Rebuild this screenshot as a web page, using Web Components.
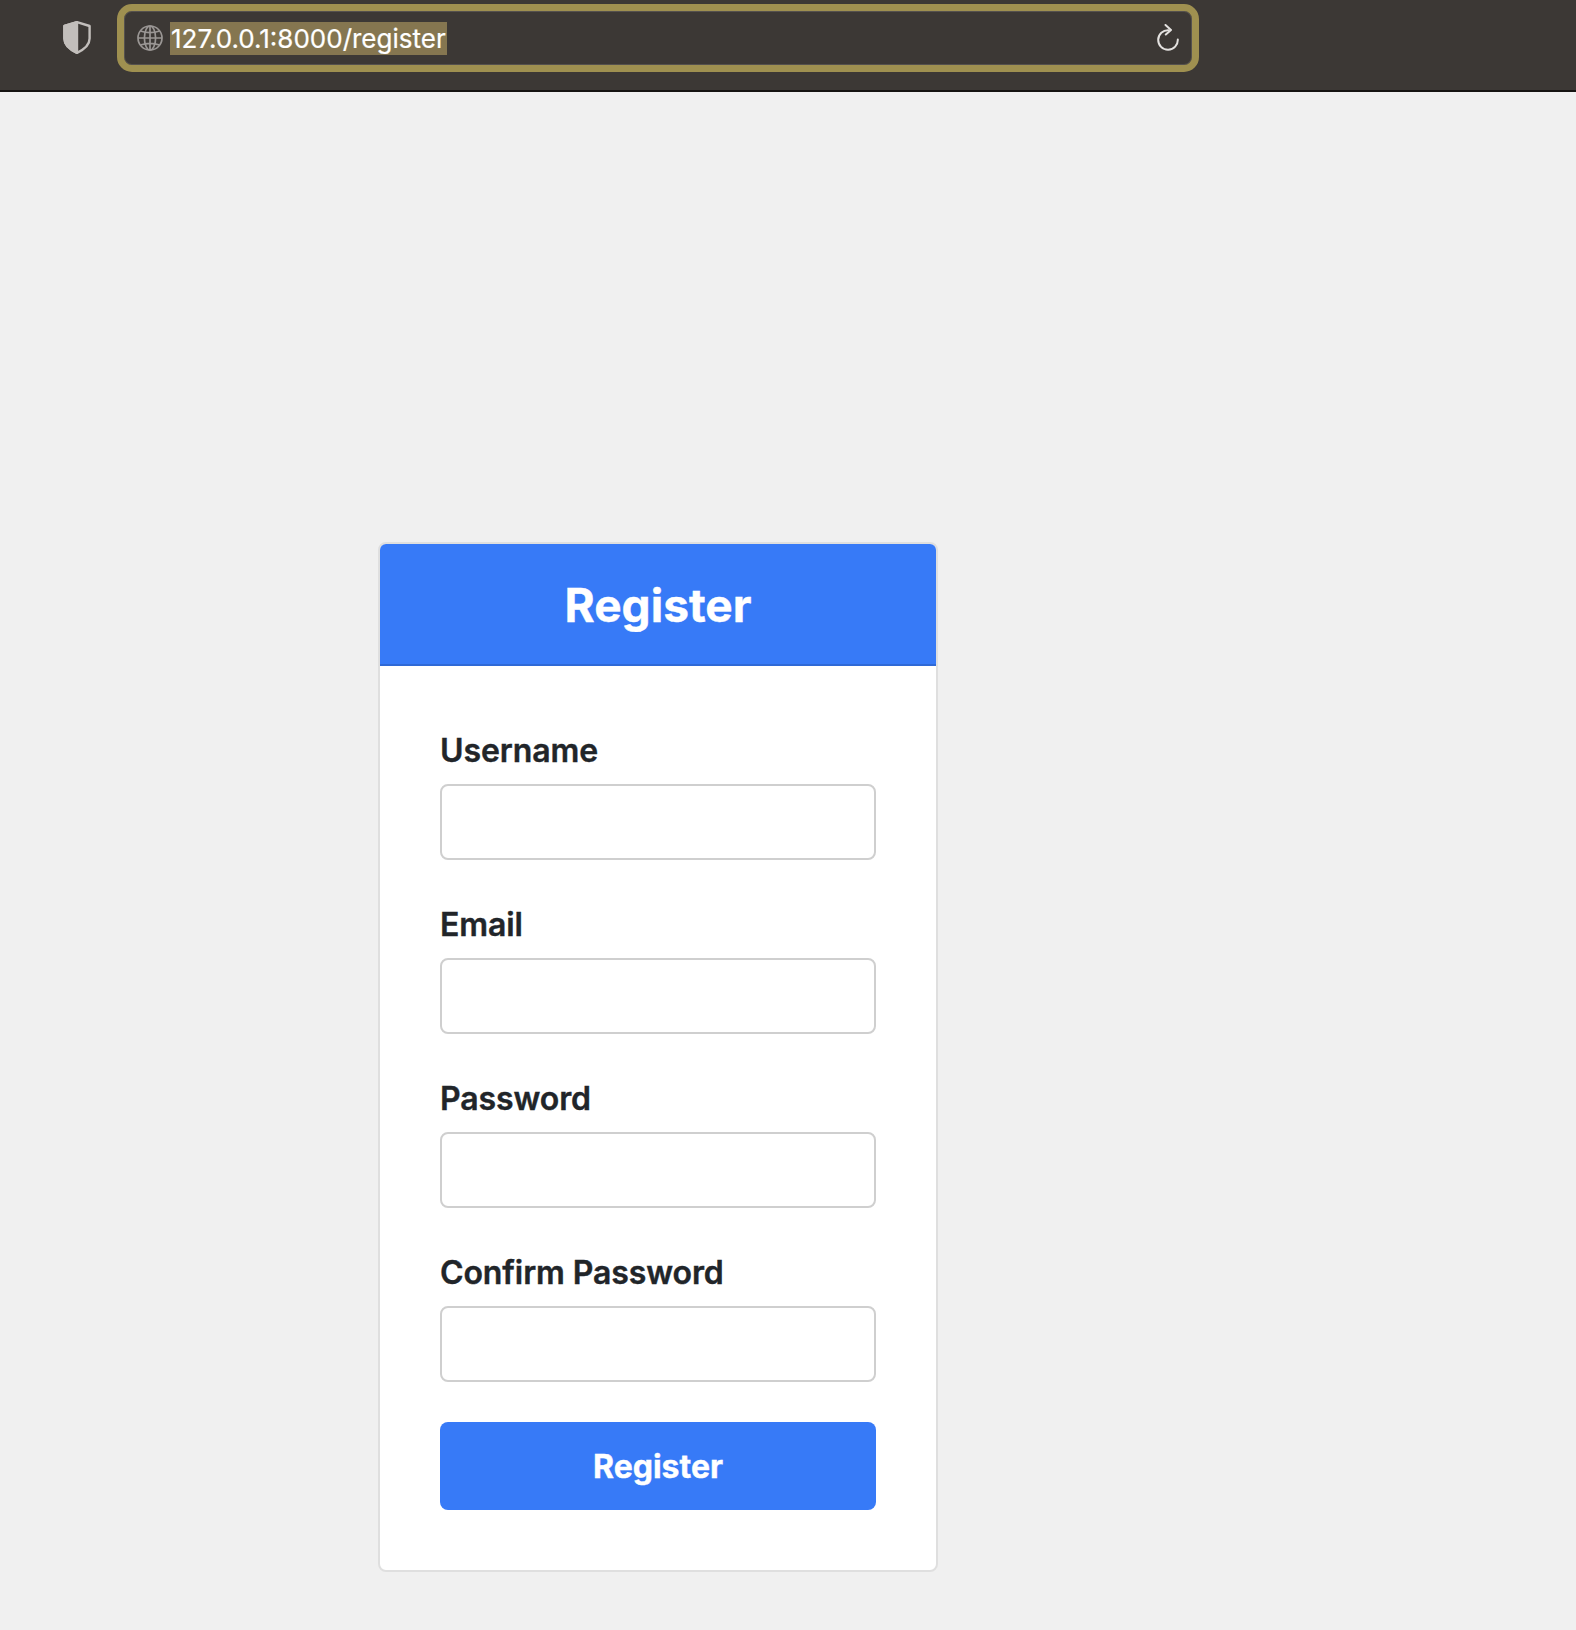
<!DOCTYPE html>
<html lang="en">
<head>
<meta charset="utf-8">
<title>Register</title>
<style>
  html, body { margin: 0; padding: 0; }
  body { background: #f0f0f0; font-family: Inter, "Liberation Sans", sans-serif; }
</style>
</head>
<body>
<browser-bar url="127.0.0.1:8000/register"></browser-bar>
<register-page>
  <register-card heading="Register">
    <form-field label="Username" type="text"></form-field>
    <form-field label="Email" type="email"></form-field>
    <form-field label="Password" type="password"></form-field>
    <form-field label="Confirm Password" type="password"></form-field>
    <submit-button>Register</submit-button>
  </register-card>
</register-page>

<script>
class BrowserBar extends HTMLElement {
    constructor() {
        super();
        this.attachShadow({ mode: 'open' });
        this.render();
    }

    render() {
        this.shadowRoot.innerHTML = `
        <style>
            :host {
                display: flex;
                align-items: flex-start;
                box-sizing: border-box;
                height: 92px;
                background: #3c3835;
                border-bottom: 2px solid #161412;
                padding: 4px 0 0 63px;
            }
            .shield {
                width: 28px;
                height: 33px;
                margin: 17px 26px 0 0;
                flex: none;
            }
            .ring {
                display: flex;
                align-items: center;
                box-sizing: border-box;
                width: 1082px;
                height: 68px;
                border: 7px solid #9f9050;
                border-radius: 15px;
                padding: 0 13px;
                box-shadow: inset 0 0 0 1px #55514e;
            }
            .globe { width: 26px; height: 26px; flex: none; margin-right: 7px; }
            .url {
                background: #857650;
                color: #fff;
                font-size: 26px;
                font-weight: 400;
                line-height: 31px;
                -webkit-text-stroke: 0.2px #fff;
                font-family: Inter, "Liberation Sans", sans-serif;
                padding: 1px 1px;
            }
            .reload { width: 22px; height: 27px; margin: 0 0 2px auto; flex: none; }
        </style>
        <svg class="shield" viewBox="0 0 28 33">
            <path d="M14 1.2 L26.6 5 V17.5 C26.6 24.5 20 29 14 31.8 C8 29 1.4 24.5 1.4 17.5 V5 Z" fill="none" stroke="#c2bebb" stroke-width="2.4" stroke-linejoin="round"/>
            <path d="M14 1.2 V31.8 C8 29 1.4 24.5 1.4 17.5 V5 Z" fill="#c2bebb" stroke="#c2bebb" stroke-width="2.4" stroke-linejoin="round"/>
        </svg>
        <div class="ring">
            <svg class="globe" viewBox="0 0 26 26" fill="none" stroke="#9a9694" stroke-width="1.7">
                <circle cx="13" cy="13" r="12"/>
                <ellipse cx="13" cy="13" rx="5.6" ry="12"/>
                <path d="M13 1 V25 M1 13 H25 M3.4 6 Q13 9.4 22.6 6 M3.4 20 Q13 16.6 22.6 20"/>
            </svg>
            <span class="url">${this.getAttribute('url')}</span>
            <svg class="reload" viewBox="0 0 22 27" fill="none" stroke="#e4e2e0" stroke-width="2" stroke-linecap="round" stroke-linejoin="round">
                <path d="M11.5 6.2 A9.8 9.8 0 1 0 20.8 15.5"/>
                <path d="M8.5 1 L14 6 L8.8 10.5"/>
            </svg>
        </div>
        `;
    }
}
customElements.define('browser-bar', BrowserBar);

class RegisterPage extends HTMLElement {
    constructor() {
        super();
        this.attachShadow({ mode: 'open' });
        this.shadowRoot.innerHTML = `
        <style>
            :host {
                display: block;
                padding: 450px 0 58px 378px;
            }
        </style>
        <slot></slot>
        `;
    }
}
customElements.define('register-page', RegisterPage);

class RegisterCard extends HTMLElement {
    constructor() {
        super();
        this.attachShadow({ mode: 'open' });
        this.shadowRoot.innerHTML = `
        <style>
            :host {
                display: block;
                box-sizing: border-box;
                width: 560px;
                background: #fff;
                border: 2px solid #dfdfdf;
                border-radius: 8px;
                overflow: hidden;
            }
            header {
                box-sizing: border-box;
                height: 122px;
                padding-top: 1px;
                background: #377af7;
                border-bottom: 2px solid #2f69d6;
                display: flex;
                align-items: center;
                justify-content: center;
            }
            h1 {
                margin: 0;
                color: #fff;
                font-size: 46px;
                font-weight: 700;
                -webkit-text-stroke: 0.4px #fff;
                font-family: Inter, "Liberation Sans", sans-serif;
            }
            .body {
                display: flex;
                flex-direction: column;
                padding: 65px 60px 60px;
            }
        </style>
        <header><h1>${this.getAttribute('heading')}</h1></header>
        <div class="body"><slot></slot></div>
        `;
    }
}
customElements.define('register-card', RegisterCard);

class FormField extends HTMLElement {
    constructor() {
        super();
        this.attachShadow({ mode: 'open' });
        this.shadowRoot.innerHTML = `
        <style>
            :host {
                display: block;
                margin-bottom: 45px;
            }
            :host(:last-of-type) {
                margin-bottom: 40px;
            }
            label {
                display: block;
                margin-bottom: 13px;
                color: #212529;
                font-size: 32px;
                line-height: 40px;
                font-weight: 600;
                letter-spacing: -0.1px;
                -webkit-text-stroke: 0.4px #212529;
                font-family: Inter, "Liberation Sans", sans-serif;
            }
            input {
                display: block;
                box-sizing: border-box;
                width: 100%;
                height: 76px;
                background: #fff;
                border: 2px solid #cfcfcf;
                border-radius: 8px;
                outline: none;
            }
        </style>
        <label>${this.getAttribute('label')}</label>
        <input type="${this.getAttribute('type')}">
        `;
    }
}
customElements.define('form-field', FormField);

class SubmitButton extends HTMLElement {
    constructor() {
        super();
        this.attachShadow({ mode: 'open' });
        this.shadowRoot.innerHTML = `
        <style>
            :host {
                display: block;
            }
            button {
                display: block;
                width: 100%;
                height: 88px;
                background: #377af7;
                color: #fff;
                border: none;
                border-radius: 8px;
                font-size: 32px;
                font-weight: 700;
                -webkit-text-stroke: 0.4px #fff;
                font-family: Inter, "Liberation Sans", sans-serif;
            }
        </style>
        <button type="submit"><slot></slot></button>
        `;
    }
}
customElements.define('submit-button', SubmitButton);
</script>
</body>
</html>
